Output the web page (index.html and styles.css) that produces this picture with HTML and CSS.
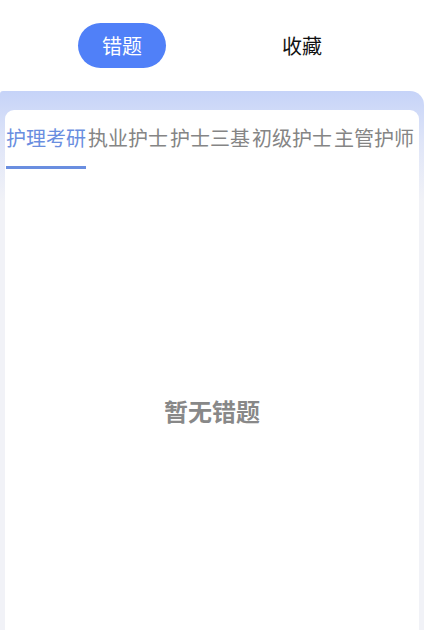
FILE: index.html
```html
<!DOCTYPE html>
<html lang="zh-CN">
<head>
<meta charset="utf-8">
<title>错题</title>
<link rel="stylesheet" href="styles.css">
</head>
<body>
<div class="page">
  <header class="header">
    <div class="seg seg-active">错题</div>
    <div class="seg">收藏</div>
  </header>
  <main class="main">
    <section class="card">
      <nav class="tabs">
        <div class="tab tab-active">护理考研</div>
        <div class="tab">执业护士</div>
        <div class="tab">护士三基</div>
        <div class="tab">初级护士</div>
        <div class="tab">主管护师</div>
      </nav>
      <div class="empty">暂无错题</div>
    </section>
  </main>
</div>
</body>
</html>
```
FILE: styles.css
```css
* { box-sizing: border-box; }
html, body {
  margin: 0;
  padding: 0;
  height: 100%;
}
body {
  font-family: "Noto Sans CJK SC", "Noto Sans", sans-serif;
  background: #f1f2f7;
  overflow: hidden;
}
.page {
  height: 100%;
  display: flex;
  flex-direction: column;
  background: linear-gradient(to bottom, #ffffff 0, #ffffff 110px, #f1f2f7 110px);
}
.header {
  height: 91px;
  background: #ffffff;
  display: flex;
  justify-content: center;
  align-items: flex-start;
  gap: 92px;
  padding-top: 23px;
}
.seg {
  width: 88px;
  height: 45px;
  border-radius: 23px;
  display: flex;
  align-items: center;
  justify-content: center;
  font-size: 20px;
  color: #111111;
}
.seg-active {
  background: #5080f8;
  color: #ffffff;
}
.main {
  flex: 1;
  display: flex;
  flex-direction: column;
  padding: 19px 5px 0 5px;
  border-top-right-radius: 14px;
  border-top-left-radius: 3px;
  background: linear-gradient(to bottom, #c6d3f8 0, #dfe5f8 50px, #f1f2f7 110px, #f1f2f7 100%);
}
.card {
  flex: 1;
  background: #ffffff;
  border-radius: 9px 9px 0 0;
  display: flex;
  flex-direction: column;
}
.tabs {
  display: flex;
  gap: 2px;
  padding-left: 1px;
  padding-top: 13px;
}
.tab {
  font-size: 20px;
  line-height: 30px;
  color: #858585;
  white-space: nowrap;
  padding-bottom: 13px;
  border-bottom: 3px solid transparent;
}
.tab-active {
  color: #6a8ee0;
  border-bottom-color: #6a8ee0;
}
.empty {
  margin-top: 224px;
  text-align: center;
  font-size: 24px;
  font-weight: bold;
  color: #888888;
}
```
